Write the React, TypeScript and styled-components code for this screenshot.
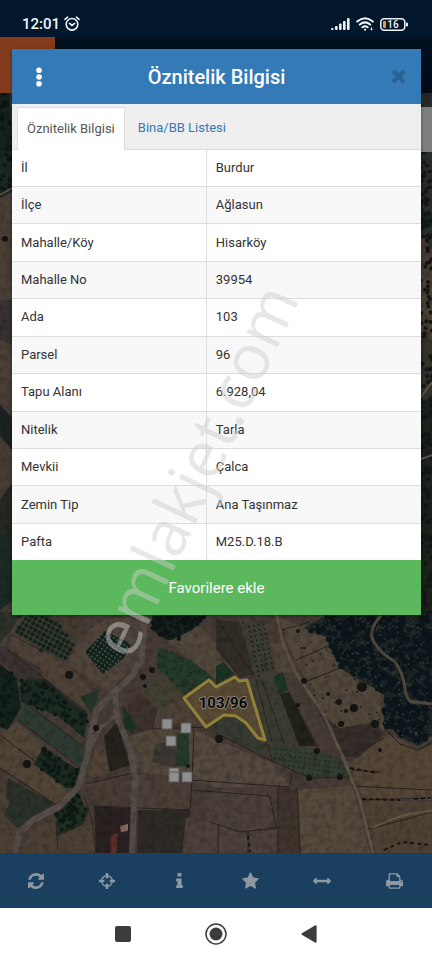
import React from 'react';
import styled, { createGlobalStyle } from 'styled-components';

const GlobalStyle = createGlobalStyle`
  *, *::before, *::after { box-sizing: border-box; }
  body { margin: 0; background: #fff; font-family: Roboto, "Noto Sans", sans-serif; color: #333; }
  button { font: inherit; border: 0; padding: 0; background: none; cursor: pointer; }
`;

const Screen = styled.div`
  position: relative;
  display: grid;
  grid-template-rows: auto 1fr auto auto;
  min-height: 100vh;
  overflow: hidden;
`;

const StatusBar = styled.header`
  display: flex;
  align-items: center;
  justify-content: space-between;
  height: 37px;
  padding: 11px 24px 0 22px;
  background: #02162c;
  color: #f2f5f8;
`;

const StatusGroup = styled.div<{ $gap: number }>`
  display: flex;
  align-items: center;
  gap: ${(p) => p.$gap}px;
`;

const Clock = styled.time`
  font-size: 15px;
  line-height: 18px;
  font-weight: 500;
`;

const Stage = styled.div`
  display: grid;
  grid-template-columns: minmax(0, 1fr);
`;

const Backdrop = styled.div`
  grid-area: 1 / 1;
  display: flex;
  flex-direction: column;
`;

const AppHeader = styled.div`
  height: 56px;
  background: linear-gradient(#02101f, #020b16);
`;

const Brand = styled.div`
  width: 55px;
  height: 100%;
  background: #843c1c;
`;

const MapArea = styled.div`
  position: relative;
  flex: 1;
  background: #463c35;
`;

const MapSvg = styled.svg`
  position: absolute;
  inset: 0;
  width: 100%;
  height: 100%;
  display: block;
`;

const MapPanel = styled.div`
  position: absolute;
  top: 14px;
  right: 0;
  width: 12px;
  height: 45px;
  background: #7e7e7e;
`;

const Dialog = styled.section`
  grid-area: 1 / 1;
  align-self: start;
  z-index: 1;
  margin: 12px 11px 12px 12px;
  background: #fff;
  box-shadow: 0 1px 4px rgba(0, 0, 0, 0.4);
`;

const DialogHeader = styled.div`
  display: grid;
  grid-template-columns: 53px 1fr 45px;
  align-items: center;
  height: 55px;
  background: #337ab7;
`;

const DialogTitle = styled.h1`
  margin: 0;
  padding-right: 8px;
  text-align: center;
  color: #fff;
  font-size: 20px;
  line-height: 24px;
  font-weight: 500;
`;

const HeaderButton = styled.button`
  display: grid;
  place-items: center;
  height: 100%;
`;

const Tabs = styled.div`
  display: flex;
  align-items: flex-end;
  height: 46px;
  padding: 0 5px;
  background: #eee;
  border-bottom: 1px solid #ddd;
`;

const Tab = styled.button<{ $active?: boolean }>`
  height: ${(p) => (p.$active ? 43 : 42)}px;
  margin-bottom: ${(p) => (p.$active ? -1 : 0)}px;
  padding: 0 ${(p) => (p.$active ? 9 : 13)}px;
  border: ${(p) => (p.$active ? '1px solid #ddd' : '0')};
  border-bottom: 0;
  background: ${(p) => (p.$active ? '#fff' : 'transparent')};
  color: ${(p) => (p.$active ? '#555' : '#337ab7')};
  font-size: 13px;
  line-height: 18px;
  white-space: nowrap;
`;

const Table = styled.table`
  width: 100%;
  height: 410px;
  table-layout: fixed;
  border-collapse: collapse;
  font-size: 13px;
  line-height: 18px;
`;

const Row = styled.tr`
  & + & { border-top: 1px solid #ddd; }
  &:nth-child(even) { background: #f8f8f8; }
`;

const Name = styled.th`
  width: 47.5%;
  padding: 0 9px;
  text-align: left;
  font-weight: 400;
  border-right: 1px solid #ddd;
`;

const Value = styled.td`
  padding: 0 9px;
`;

const FavoriteButton = styled.button`
  display: block;
  width: 100%;
  height: 55px;
  background: #5cb85c;
  color: #fff;
  font-size: 15px;
  line-height: 20px;
`;

const Toolbar = styled.nav`
  display: grid;
  grid-template-columns: repeat(6, 1fr);
  height: 55px;
  padding-right: 2px;
  background: #1b3f5f;
  color: #8d98a1;
`;

const ToolButton = styled.button`
  display: grid;
  place-items: center;
  color: inherit;
`;

const SystemNav = styled.nav`
  display: flex;
  align-items: center;
  justify-content: center;
  gap: 63px;
  height: 52px;
  background: #fff;
`;

const SystemButton = styled.button`
  display: grid;
  place-items: center;
  width: 30px;
  height: 30px;
  color: #3c3c3c;
`;

const Watermark = styled.div`
  position: absolute;
  z-index: 2;
  top: 49%;
  left: 45%;
  transform: translate(-50%, -50%) rotate(-65deg);
  color: rgba(205, 205, 205, 0.48);
  font-family: "Open Sans", "Noto Sans", sans-serif;
  font-size: 64px;
  line-height: 72px;
  white-space: nowrap;
  pointer-events: none;
`;

const rows: [string, string][] = [
  ['İl', 'Burdur'],
  ['İlçe', 'Ağlasun'],
  ['Mahalle/Köy', 'Hisarköy'],
  ['Mahalle No', '39954'],
  ['Ada', '103'],
  ['Parsel', '96'],
  ['Tapu Alanı', '6.928,04'],
  ['Nitelik', 'Tarla'],
  ['Mevkii', 'Çalca'],
  ['Zemin Tip', 'Ana Taşınmaz'],
  ['Pafta', 'M25.D.18.B'],
];

const tools = [
  { label: 'Yenile', w: 16, h: 16, box: '0 0 1536 1536', d: 'M1511 928q0 5-1 7-64 268-268 434.5t-478 166.5q-146 0-282.5-55t-243.5-157l-129 129q-19 19-45 19t-45-19-19-45v-448q0-26 19-45t45-19h448q26 0 45 19t19 45-19 45l-137 137q71 66 161 102t187 36q134 0 250-65t186-179q11-17 53-117 8-23 30-23h192q13 0 22.5 9.5t9.5 22.5zm25-800v448q0 26-19 45t-45 19h-448q-26 0-45-19t-19-45 19-45l138-138q-148-137-349-137-134 0-250 65t-186 179q-11 17-53 117-8 23-30 23h-199q-13 0-22.5-9.5t-9.5-22.5v-7q65-268 270-434.5t480-166.5q146 0 284 55.5t245 156.5l130-129q19-19 45-19t45 19 19 45z' },
  { label: 'Konum', w: 16, h: 16, box: '0 0 1536 1536', d: 'M1197 896h-109q-26 0-45-19t-19-45v-128q0-26 19-45t45-19h109q-32-108-112.5-188.5t-188.5-112.5v109q0 26-19 45t-45 19h-128q-26 0-45-19t-19-45v-109q-108 32-188.5 112.5t-112.5 188.5h109q26 0 45 19t19 45v128q0 26-19 45t-45 19h-109q32 108 112.5 188.5t188.5 112.5v-109q0-26 19-45t45-19h128q26 0 45 19t19 45v109q108-32 188.5-112.5t112.5-188.5zm339-192v128q0 26-19 45t-45 19h-143q-37 161-154.5 278.5t-278.5 154.5v143q0 26-19 45t-45 19h-128q-26 0-45-19t-19-45v-143q-161-37-278.5-154.5t-154.5-278.5h-143q-26 0-45-19t-19-45v-128q0-26 19-45t45-19h143q37-161 154.5-278.5t278.5-154.5v-143q0-26 19-45t45-19h128q26 0 45 19t19 45v143q161 37 278.5 154.5t154.5 278.5h143q26 0 45 19t19 45z' },
  { label: 'Bilgi', w: 7, h: 15, box: '0 128 640 1408', d: 'M640 1344v128q0 26-19 45t-45 19h-512q-26 0-45-19t-19-45v-128q0-26 19-45t45-19h64v-384h-64q-26 0-45-19t-19-45v-128q0-26 19-45t45-19h384q26 0 45 19t19 45v576h64q26 0 45 19t19 45zm-128-1152v192q0 26-19 45t-45 19h-256q-26 0-45-19t-19-45v-192q0-26 19-45t45-19h256q26 0 45 19t19 45z' },
  { label: 'Favoriler', w: 17, h: 17, box: '0 0 1664 1600', d: 'M1664 615q0 22-26 48l-363 354 86 500q1 7 1 20 0 21-10.5 35.5t-30.5 14.5q-19 0-40-12l-449-236-449 236q-22 12-40 12-21 0-31.5-14.5t-10.5-35.5q0-6 2-20l86-500-364-354q-25-27-25-48 0-37 56-46l502-73 225-455q19-41 49-41t49 41l225 455 502 73q56 9 56 46z' },
  { label: 'Ölçüm', w: 18, h: 8, box: '0 256 1792 768', d: 'M1792 640q0 26-19 45l-256 256q-19 19-45 19t-45-19-19-45v-128h-1024v128q0 26-19 45t-45 19-45-19l-256-256q-19-19-19-45t19-45l256-256q19-19 45-19t45 19 19 45v128h1024v-128q0-26 19-45t45-19 45 19l256 256q19 19 19 45z' },
  { label: 'Yazdır', w: 17, h: 16, box: '0 0 1664 1536', d: 'M384 1408h896v-256h-896v256zm0-640h896v-384h-160q-40 0-68-28t-28-68v-160h-640v640zm1152 64q0-26-19-45t-45-19-45 19-19 45 19 45 45 19 45-19 19-45zm128 0v416q0 13-9.5 22.5t-22.5 9.5h-224v160q0 40-28 68t-68 28h-960q-40 0-68-28t-28-68v-160h-224q-13 0-22.5-9.5t-9.5-22.5v-416q0-79 56.5-135.5t135.5-56.5h64v-544q0-40 28-68t68-28h672q40 0 88 20t76 48l152 152q28 28 48 76t20 88v256h64q79 0 135.5 56.5t56.5 135.5z' },
];

type Pt = [number, number];

const makeRandom = (seed: number) => {
  let s = seed;
  return () => {
    s = (s * 1664525 + 1013904223) % 4294967296;
    return s / 4294967296;
  };
};

const inside = (x: number, y: number, poly: Pt[]) => {
  let hit = false;
  for (let i = 0, j = poly.length - 1; i < poly.length; j = i++) {
    const [xi, yi] = poly[i];
    const [xj, yj] = poly[j];
    if (yi > y !== yj > y && x < ((xj - xi) * (y - yi)) / (yj - yi) + xi) hit = !hit;
  }
  return hit;
};

const scatter = (poly: Pt[], count: number, seed: number): Pt[] => {
  const rnd = makeRandom(seed);
  const xs = poly.map((p) => p[0]);
  const ys = poly.map((p) => p[1]);
  const x0 = Math.min(...xs);
  const y0 = Math.min(...ys);
  const w = Math.max(...xs) - x0;
  const h = Math.max(...ys) - y0;
  const out: Pt[] = [];
  for (let i = 0; i < count * 4 && out.length < count; i++) {
    const x = x0 + rnd() * w;
    const y = y0 + rnd() * h;
    if (inside(x, y, poly)) out.push([x, y]);
  }
  return out;
};

const gridDots = (poly: Pt[], step: number, angle: number): Pt[] => {
  const c = Math.cos(angle);
  const s = Math.sin(angle);
  const [ox, oy] = poly[0];
  const out: Pt[] = [];
  for (let i = -30; i < 30; i++)
    for (let j = -30; j < 30; j++) {
      const x = ox + (i * c - j * s) * step;
      const y = oy + (i * s + j * c) * step;
      if (inside(x, y, poly)) out.push([x, y]);
    }
  return out;
};

const pts = (p: Pt[]) => p.map((q) => q.join(',')).join(' ');

const fields: { fill: string; p: Pt[] }[] = [
  { fill: '#3a342f', p: [[0, 93], [20, 93], [20, 160], [0, 165]] },
  { fill: '#17241f', p: [[0, 93], [9, 93], [14, 160], [0, 170]] },
  { fill: '#1b2b21', p: [[0, 160], [12, 150], [12, 192], [0, 198]] },
  { fill: '#4c4036', p: [[0, 200], [12, 195], [12, 300], [0, 300]] },
  { fill: '#393331', p: [[0, 300], [12, 300], [12, 345], [0, 340]] },
  { fill: '#4b4139', p: [[0, 340], [12, 345], [12, 410], [0, 400]] },
  { fill: '#1b2023', p: [[0, 405], [14, 420], [14, 452], [0, 436]] },
  { fill: '#463c34', p: [[0, 440], [14, 452], [14, 480], [0, 500]] },
  { fill: '#252523', p: [[0, 500], [14, 480], [14, 530], [0, 540]] },
  { fill: '#1b2c26', p: [[0, 538], [14, 525], [14, 600], [0, 610]] },
  { fill: '#2c2d29', p: [[419, 93], [432, 93], [432, 250], [419, 230]] },
  { fill: '#17271f', p: [[419, 210], [432, 214], [432, 226], [419, 232]] },
  { fill: '#4c4236', p: [[419, 270], [432, 290], [432, 330], [419, 310]] },
  { fill: '#35312a', p: [[419, 330], [432, 340], [432, 400], [419, 400]] },
  { fill: '#1b201f', p: [[419, 405], [432, 395], [432, 620], [419, 620]] },
  { fill: '#2f3029', p: [[0, 612], [22, 612], [0, 648]] },
  { fill: '#353a2f', p: [[20, 616], [50, 613], [74, 643], [66, 660], [40, 650], [15, 632]] },
  { fill: '#443b33', p: [[50, 613], [82, 615], [80, 640], [72, 642]] },
  { fill: '#504339', p: [[12, 634], [40, 648], [66, 664], [98, 697], [88, 710], [44, 678], [8, 650]] },
  { fill: '#3b3230', p: [[0, 644], [40, 668], [45, 682], [20, 682], [0, 660]] },
  { fill: '#51443a', p: [[82, 635], [104, 619], [143, 616], [140, 660], [108, 692], [68, 664]] },
  { fill: '#14231f', p: [[0, 664], [17, 678], [21, 708], [8, 730], [0, 727]] },
  { fill: '#1b2a22', p: [[20, 680], [46, 679], [66, 699], [88, 714], [84, 738], [58, 716], [21, 702]] },
  { fill: '#2e3b30', p: [[25, 702], [84, 746], [82, 768], [17, 720]] },
  { fill: '#514439', p: [[17, 722], [44, 746], [35, 765], [66, 790], [74, 794], [56, 804], [0, 768], [0, 736]] },
  { fill: '#1a2a20', p: [[43, 747], [80, 771], [78, 788], [66, 788], [34, 764]] },
  { fill: '#2a3229', p: [[8, 778], [54, 804], [17, 828], [4, 814]] },
  { fill: '#4c4036', p: [[0, 792], [10, 802], [4, 815], [16, 830], [12, 853], [0, 853]] },
  { fill: '#202d24', p: [[78, 793], [88, 812], [82, 826], [58, 836], [56, 814]] },
  { fill: '#4b4036', p: [[55, 822], [58, 836], [84, 824], [96, 826], [96, 853], [22, 853], [30, 828]] },
  { fill: '#15231f', p: [[85, 652], [105, 631], [131, 644], [124, 658], [103, 674]] },
  { fill: '#25362b', p: [[80, 697], [97, 690], [98, 700], [90, 712]] },
  { fill: '#17231f', p: [[152, 616], [208, 614], [182, 640], [166, 640], [152, 630]] },
  { fill: '#51463b', p: [[168, 642], [200, 626], [222, 650], [234, 672], [213, 678]] },
  { fill: '#253a2a', p: [[158, 647], [190, 660], [213, 677], [185, 695], [158, 668]] },
  { fill: '#434031', p: [[143, 690], [160, 674], [182, 694], [158, 708]] },
  { fill: '#3c332f', p: [[128, 704], [140, 692], [158, 710], [153, 728], [132, 735]] },
  { fill: '#1c3021', p: [[123, 706], [136, 725], [134, 734], [124, 728]] },
  { fill: '#4e4338', p: [[158, 709], [184, 699], [206, 728], [182, 722], [153, 729]] },
  { fill: '#25241f', p: [[104, 736], [117, 722], [130, 765], [109, 772]] },
  { fill: '#514439', p: [[95, 750], [104, 745], [110, 772], [88, 781]] },
  { fill: '#51463b', p: [[130, 736], [156, 728], [196, 732], [194, 768], [190, 778], [137, 772]] },
  { fill: '#3d3731', p: [[155, 744], [176, 742], [176, 768], [152, 762]] },
  { fill: '#263a29', p: [[177, 733], [189, 733], [189, 766], [176, 766]] },
  { fill: '#4a3e36', p: [[86, 784], [132, 774], [132, 806], [92, 804]] },
  { fill: '#4c4037', p: [[137, 774], [192, 780], [191, 809], [138, 809]] },
  { fill: '#292420', p: [[94, 806], [131, 808], [130, 853], [96, 853]] },
  { fill: '#2f2925', p: [[138, 810], [190, 810], [182, 853], [137, 853]] },
  { fill: '#544840', p: [[194, 730], [216, 740], [270, 762], [290, 786], [218, 788], [192, 780]] },
  { fill: '#4b413b', p: [[204, 798], [216, 790], [274, 794], [274, 826], [240, 832], [210, 822]] },
  { fill: '#4d433a', p: [[186, 818], [216, 824], [240, 832], [276, 830], [276, 853], [182, 853]] },
  { fill: '#40362f', p: [[278, 788], [297, 788], [300, 853], [278, 853]] },
  { fill: '#574a3d', p: [[298, 790], [352, 786], [370, 853], [301, 853]] },
  { fill: '#373a30', p: [[214, 717], [238, 718], [257, 741], [269, 745], [268, 757], [212, 732]] },
  { fill: '#302d28', p: [[216, 620], [240, 622], [254, 674], [240, 678], [216, 650]] },
  { fill: '#3e3e31', p: [[243, 623], [264, 620], [275, 671], [256, 677]] },
  { fill: '#50453a', p: [[271, 643], [284, 641], [294, 672], [278, 673]] },
  { fill: '#1a3020', p: [[216, 666], [224, 662], [234, 674], [216, 684]] },
  { fill: '#3e3d32', p: [[250, 681], [272, 675], [316, 746], [267, 744]] },
  { fill: '#20221e', p: [[280, 694], [289, 692], [316, 746], [299, 746]] },
  { fill: '#1b3826', p: [[273, 677], [283, 672], [288, 690], [279, 694]] },
  { fill: '#343e30', p: [[272, 743], [318, 750], [343, 760], [350, 777], [310, 777], [271, 758]] },
  { fill: '#51463a', p: [[279, 617], [306, 628], [326, 635], [332, 655], [356, 682], [380, 690], [384, 730], [350, 758], [322, 712], [288, 645]] },
  { fill: '#342f29', p: [[318, 712], [340, 728], [376, 722], [384, 734], [358, 758], [344, 756]] },
  { fill: '#554638', p: [[350, 764], [388, 734], [420, 750], [432, 745], [432, 800], [362, 800]] },
  { fill: '#312a26', p: [[367, 815], [392, 812], [386, 826], [369, 830]] },
  { fill: '#4f4235', p: [[362, 800], [432, 802], [432, 853], [376, 853]] },
];

const forest: Pt[] = [[304, 628], [329, 614], [432, 614], [432, 735], [419, 746], [402, 738], [391, 728], [384, 728], [384, 694], [364, 682], [343, 670], [333, 653], [326, 637]];
const leftWoods: Pt[] = [[0, 664], [17, 678], [21, 708], [8, 730], [0, 727]];
const strip: Pt[] = [[20, 680], [46, 679], [66, 699], [88, 714], [84, 738], [58, 716], [21, 702]];
const strip2: Pt[] = [[43, 747], [80, 771], [78, 788], [66, 788], [34, 764]];
const grove: Pt[] = [[78, 793], [88, 812], [82, 826], [58, 836], [56, 814]];
const topTrees: Pt[] = [[152, 616], [208, 614], [182, 640], [166, 640], [152, 630]];
const greenPatch: Pt[] = [[158, 647], [190, 660], [213, 677], [185, 695], [158, 668]];
const rightEdge: Pt[] = [[419, 150], [432, 150], [432, 620], [419, 620]];
const leftEdge: Pt[] = [[0, 93], [14, 93], [14, 190], [0, 198]];
const slope: Pt[] = [[290, 640], [330, 650], [380, 690], [384, 735], [350, 755], [318, 705]];

const treeSets = [
  { t: scatter(forest, 420, 7), r: 3, fill: '#0f191b' },
  { t: scatter(forest, 220, 9), r: 1, fill: '#2d3934' },
  { t: scatter(leftWoods, 30, 3), r: 2, fill: '#0f1b19' },
  { t: scatter(strip, 50, 11), r: 2, fill: '#101a17' },
  { t: scatter(strip2, 40, 12), r: 2, fill: '#101a15' },
  { t: scatter(grove, 40, 14), r: 2, fill: '#111b16' },
  { t: scatter(topTrees, 60, 15), r: 2, fill: '#0e1817' },
  { t: scatter(greenPatch, 40, 16), r: 1, fill: '#1a2a21' },
  { t: scatter(rightEdge, 160, 17), r: 2, fill: '#121918' },
  { t: scatter(leftEdge, 40, 18), r: 2, fill: '#101917' },
  { t: scatter(slope, 26, 21), r: 1, fill: '#1f211c' },
  { t: gridDots([[20, 616], [50, 613], [74, 643], [66, 660], [40, 650], [15, 632]], 5, 0.5), r: 2, fill: '#18221b' },
  { t: gridDots([[85, 652], [105, 631], [131, 644], [124, 658], [103, 674]], 4, 0.6), r: 1, fill: '#4a594c' },
  { t: gridDots([[243, 623], [264, 620], [275, 671], [256, 677]], 5, -0.2), r: 1, fill: '#1a211b' },
  { t: gridDots([[272, 743], [318, 750], [343, 760], [350, 777], [310, 777], [271, 758]], 5, 0.15), r: 1, fill: '#1d3023' },
];

const singleTrees: [number, number, number][] = [
  [69, 675, 4], [27, 764, 4], [143, 677, 3], [152, 670, 3], [145, 686, 2], [219, 739, 4], [362, 687, 5], [354, 708, 4], [341, 724, 3],
  [375, 724, 4], [339, 702, 3], [328, 694, 2], [383, 691, 3], [309, 778, 3], [317, 751, 3], [298, 705, 2], [340, 777, 3], [188, 766, 2],
  [5, 239, 3], [44, 750, 3], [96, 728, 3], [298, 631, 2], [302, 648, 1], [304, 681, 3], [346, 711, 2], [380, 750, 2],
];

const lines = [
  'M10 634L44 652M8 650L86 712M44 680L88 716M18 720L80 768M25 703L84 747M0 768L58 806M0 735L44 768',
  'M86 784L137 772M94 806L190 810M84 796L92 820L96 853M56 822L58 850',
  'M190 780L290 787M210 822L240 832L278 828M278 788L278 853M297 787L300 853M218 825L218 853M248 832L248 853M190 790L270 796L276 828',
  'M216 733L270 760L310 778L349 777M268 744L272 762M281 690L300 746M289 692L318 748M292 770L290 786M256 680L272 742M262 680L284 744',
  'M362 800L432 798M366 830L432 812M352 770L380 772M352 786L432 790M216 618L254 676M384 728L400 744L418 750L432 742',
  'M305 682L340 668M296 660L330 645M282 630L310 622M350 757L384 738M153 729L206 727M194 730L192 780L190 809',
];

const MapPicture = () => (
  <MapSvg viewBox="0 93 432 760" preserveAspectRatio="xMidYMax slice" role="img" aria-label="Uydu haritası">
    <defs>
      <filter id="grain" x="0" y="0" width="100%" height="100%">
        <feTurbulence type="fractalNoise" baseFrequency="0.16" numOctaves="3" seed="4" />
        <feColorMatrix values="0 0 0 0 0  0 0 0 0 0  0 0 0 0 0  1.6 0 0 0 -0.62" />
      </filter>
      <filter id="soft"><feGaussianBlur stdDeviation="0.6" /></filter>
    </defs>
    <rect y="93" width="432" height="760" fill="#463c35" />
    <g filter="url(#soft)">
      {fields.map((f, i) => <polygon key={i} points={pts(f.p)} fill={f.fill} />)}
      <polygon points={pts(forest)} fill="#1b2625" />
      {treeSets.map((s, i) => (
        <g key={i} fill={s.fill}>
          {s.t.map(([x, y], k) => <circle key={k} cx={x} cy={y} r={s.r} />)}
        </g>
      ))}
      <g fill="none" stroke="#29241f" strokeWidth="1">
        {lines.map((d) => <path key={d} d={d} />)}
      </g>
      <g fill="none" stroke="#574e48" strokeLinejoin="round">
        <path d="M145 612L142 660L132 676L112 694L97 710L91 733L87 756L78 787L60 806L33 820L19 833L15 853" strokeWidth="6" />
        <path d="M115 690L117 717L130 748L135 777L132 853" strokeWidth="6" />
        <path d="M118 714L100 728L88 752" strokeWidth="4" />
        <path d="M135 612L137 640L130 672" strokeWidth="3" stroke="#4c443d" />
        <path d="M276 613L283 643L296 673L323 713L343 757L359 797L373 853" strokeWidth="3" stroke="#5d5346" />
        <path d="M381 616Q367 630 374 642T394 661Q403 672 405 688T416 702L432 704" strokeWidth="3" stroke="#51483e" />
        <path d="M0 646L26 614" strokeWidth="3" stroke="#45413b" />
        <path d="M372 828Q388 820 402 816T432 811" strokeWidth="2" stroke="#655545" />
        <path d="M419 400L432 382M0 195L12 188M419 460L432 455" strokeWidth="2" stroke="#5d5850" />
      </g>
      <g fill="#131612">
        {singleTrees.map(([x, y, r]) => <circle key={`${x}-${y}`} cx={x} cy={y} r={r} />)}
      </g>
      <path d="M350 768L378 773M362 799L400 800M414 799L430 798M384 850L402 842L430 845M248 836L250 852" stroke="#191812" strokeWidth="2" strokeDasharray="4 3" fill="none" />
      <path d="M111 836L118 833L116 853H110Z" fill="#5d2f2a" />
      <path d="M120 826L128 824L128 831L121 832Z" fill="#8a6a60" />
    </g>
    <rect y="93" width="432" height="760" filter="url(#grain)" opacity="0.28" />
    <polygon
      points="184,698 209,680 216,687 235,677 239,681 247,680 265,740 258,738 246,723 236,716 224,715 206,727"
      fill="#8a7132" fillOpacity="0.28" stroke="#8f8139" strokeWidth="3" strokeLinejoin="round"
    />
    <g fill="#8e8e8e" stroke="#5b5b5b" strokeWidth="1">
      {[[162, 719], [181, 723], [166, 736], [169, 768], [169, 772], [182, 772]].map(([x, y]) => (
        <rect key={`${x}-${y}`} x={x} y={y} width="10" height="10" />
      ))}
    </g>
    <text
      x="223" y="708" textAnchor="middle" fontFamily="Roboto, sans-serif" fontSize="15" fontWeight="700"
      fill="#0a0a0a" stroke="#857d72" strokeWidth="2" strokeLinejoin="round" paintOrder="stroke"
    >103/96</text>
  </MapSvg>
);

export default function App() {
  return (
    <Screen>
      <GlobalStyle />
      <StatusBar>
        <StatusGroup $gap={4}>
          <Clock>12:01</Clock>
          <svg width="16" height="16" viewBox="0 0 16 16" fill="none" stroke="currentColor" strokeWidth="1.6" strokeLinecap="round" aria-label="Alarm">
            <circle cx="8" cy="8.3" r="5.8" />
            <path d="M1 3.4L3.6 1.2M15 3.4L12.4 1.2M5.6 7.4L8 9.4L10.6 7.4" />
          </svg>
        </StatusGroup>
        <StatusGroup $gap={6}>
          <svg width="19" height="14" viewBox="0 0 19 14" fill="currentColor" aria-label="Sinyal">
            <rect x="0" y="11" width="2.6" height="2" rx="1" />
            <rect x="4" y="9" width="2.6" height="4" rx="1" />
            <rect x="8" y="6.5" width="2.6" height="6.5" rx="1" />
            <rect x="12" y="4" width="2.6" height="9" rx="1" />
            <rect x="16" y="1" width="2.6" height="12" rx="1" />
          </svg>
          <svg width="18" height="14" viewBox="0 0 18 14" fill="none" stroke="currentColor" strokeWidth="2" strokeLinecap="round" aria-label="Wi-Fi">
            <path d="M1.2 4.6Q9 -2 16.8 4.6M3.8 7.6Q9 3.2 14.2 7.6M6.4 10.3Q9 8.2 11.6 10.3" />
            <path d="M9 12.6V12.7" />
            <path d="M15.5 10.5V13M14.5 12L15.5 13L16.5 12" strokeWidth="0.8" />
          </svg>
          <svg width="28" height="13" viewBox="0 0 28 13" aria-label="Pil yüzde 16">
            <rect x="0.8" y="0.8" width="24" height="11.4" rx="3.5" fill="none" stroke="currentColor" strokeWidth="1.5" />
            <rect x="26" y="4.5" width="2" height="4" rx="1" fill="currentColor" />
            <rect x="3" y="3" width="3" height="7" rx="1" fill="#e0a33c" />
            <text x="13" y="10" textAnchor="middle" fontFamily="Roboto, sans-serif" fontSize="10" fontWeight="500" fill="currentColor">16</text>
          </svg>
        </StatusGroup>
      </StatusBar>

      <Stage>
        <Backdrop>
          <AppHeader><Brand /></AppHeader>
          <MapArea>
            <MapPicture />
            <MapPanel />
          </MapArea>
        </Backdrop>

        <Dialog role="dialog" aria-labelledby="dialog-title">
          <DialogHeader>
            <HeaderButton aria-label="Menü">
              <svg width="6" height="20" viewBox="0 0 6 20" fill="#fff">
                <circle cx="3" cy="3.2" r="2.8" /><circle cx="3" cy="10" r="2.8" /><circle cx="3" cy="16.8" r="2.8" />
              </svg>
            </HeaderButton>
            <DialogTitle id="dialog-title">Öznitelik Bilgisi</DialogTitle>
            <HeaderButton aria-label="Kapat">
              <svg width="13" height="13" viewBox="110 258 1188 1188" fill="#29618f">
                <path d="M1298 1214q0 40-28 68l-136 136q-28 28-68 28t-68-28l-294-294-294 294q-28 28-68 28t-68-28l-136-136q-28-28-28-68t28-68l294-294-294-294q-28-28-28-68t28-68l136-136q28-28 68-28t68 28l294 294 294-294q28-28 68-28t68 28l136 136q28 28 28 68t-28 68l-294 294 294 294q28 28 28 68z" />
              </svg>
            </HeaderButton>
          </DialogHeader>
          <Tabs role="tablist">
            <Tab role="tab" aria-selected="true" $active>Öznitelik Bilgisi</Tab>
            <Tab role="tab" aria-selected="false">Bina/BB Listesi</Tab>
          </Tabs>
          <Table>
            <tbody>
              {rows.map(([name, value]) => (
                <Row key={name}>
                  <Name scope="row">{name}</Name>
                  <Value>{value}</Value>
                </Row>
              ))}
            </tbody>
          </Table>
          <FavoriteButton>Favorilere ekle</FavoriteButton>
        </Dialog>
      </Stage>

      <Toolbar aria-label="Harita araçları">
        {tools.map((t) => (
          <ToolButton key={t.label} aria-label={t.label}>
            <svg width={t.w} height={t.h} viewBox={t.box} fill="currentColor"><path d={t.d} /></svg>
          </ToolButton>
        ))}
      </Toolbar>

      <SystemNav aria-label="Sistem">
        <SystemButton aria-label="Son uygulamalar">
          <svg width="16" height="16" viewBox="0 0 16 16" fill="currentColor"><rect width="16" height="16" rx="2" /></svg>
        </SystemButton>
        <SystemButton aria-label="Ana ekran">
          <svg width="22" height="22" viewBox="0 0 22 22"><circle cx="11" cy="11" r="10" fill="none" stroke="currentColor" strokeWidth="1.5" /><circle cx="11" cy="11" r="6.5" fill="currentColor" /></svg>
        </SystemButton>
        <SystemButton aria-label="Geri">
          <svg width="16" height="18" viewBox="0 0 16 18" fill="currentColor"><path d="M14 .4Q15.6 0 15.6 1.4V16.6Q15.6 18 14 17.6L.8 9.8Q0 9 .8 8.2Z" /></svg>
        </SystemButton>
      </SystemNav>

      <Watermark>emlakjet.com</Watermark>
    </Screen>
  );
}
